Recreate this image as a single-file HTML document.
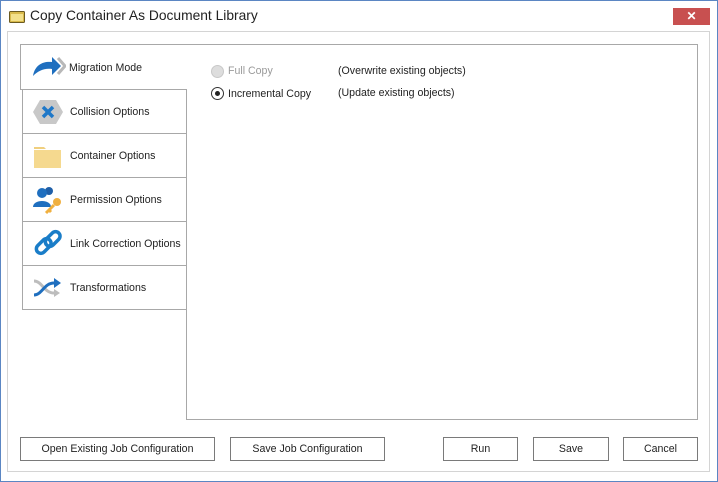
<!DOCTYPE html>
<html><head><style>
*{margin:0;padding:0;box-sizing:border-box}
body{width:718px;height:482px;background:#fff;font-family:"Liberation Sans",Tahoma,sans-serif;font-size:10.6px;color:#222;position:relative;overflow:hidden}
.win{position:absolute;left:0;top:0;width:718px;height:482px;border:1px solid #5b86c3}
.title{position:absolute;left:30px;top:8px;font-size:13.8px;color:#222}
.close{position:absolute;left:673px;top:8px;width:37px;height:17px;background:#c85050;color:#fff;text-align:center;font-size:12px;line-height:17px;font-weight:bold}
.panel{position:absolute;left:7px;top:31px;width:703px;height:441px;border:1px solid #d4d4d4}
.content{position:absolute;left:186px;top:44px;width:512px;height:376px;border:1px solid #a8a8a8}
.tab{position:absolute;left:22px;width:165px;height:45px;border:1px solid #a8a8a8;background:#fff;}
.tab span{position:absolute;left:47px;top:16px}
.tab svg{position:absolute;left:9px;top:7px}
.sel{left:20px;top:44px;width:167px;border-right:none;height:46px;z-index:2}
.sel span{left:48px;top:17px}
.btn{position:absolute;top:437px;height:24px;border:1px solid #7a7a7a;background:#fff;text-align:center;line-height:22px;font-size:10.6px}
.rad{position:absolute;width:13px;height:13px;border-radius:50%;border:1px solid #333;background:#fff}
</style></head><body>
<div class="win"></div>
<svg style="position:absolute;left:9px;top:9px" width="16" height="14"><rect x="0.5" y="2.5" width="15" height="11" rx="1" fill="#d8b94a" stroke="#6b5a20"/><rect x="2" y="5" width="12" height="7" fill="#f3e08a"/></svg>
<div class="title">Copy Container As Document Library</div>
<div class="close">✕</div>
<div class="panel"></div>
<div class="content"></div>
<div class="tab sel"><svg width="36" height="30"><path d="M3 24 C5 12 14 9 22 10 L22 5 L31 14 L22 23 L22 17 C14 16 8 19 3 24Z" fill="#1f6fbf"/><path d="M28 6 L35 14 L28 22" stroke="#b8b8b8" stroke-width="3" fill="none"/></svg><span>Migration Mode</span></div>
<div class="tab" style="top:89px"><svg width="32" height="30"><polygon points="8,3 24,3 31,15 24,27 8,27 1,15" fill="#c8c8c8"/><path d="M11 10 L21 20 M21 10 L11 20" stroke="#1f78c8" stroke-width="3.5"/></svg><span>Collision Options</span></div>
<div class="tab" style="top:133px"><svg width="32" height="30"><path d="M2 8 L2 6 L12 6 L14 8 Z" fill="#f0cf7e"/><rect x="2" y="9" width="27" height="18" fill="#f5d98f"/></svg><span>Container Options</span></div>
<div class="tab" style="top:177px"><svg width="32" height="30"><circle cx="17" cy="6" r="4" fill="#1f5fa8"/><circle cx="10" cy="8" r="5" fill="#1f6fbf"/><path d="M1 22 C1 14 19 14 19 22Z" fill="#1f6fbf"/><circle cx="25" cy="17" r="4" fill="#f0b040"/><path d="M22 20 L14 28 M17 25 L19 27" stroke="#f0b040" stroke-width="3"/></svg><span>Permission Options</span></div>
<div class="tab" style="top:221px"><svg width="32" height="30"><rect x="3" y="13" width="17" height="9" rx="4.5" transform="rotate(-45 11 17)" fill="none" stroke="#1a7dc8" stroke-width="3.5"/><rect x="12" y="6" width="17" height="9" rx="4.5" transform="rotate(-45 20 10)" fill="none" stroke="#1a7dc8" stroke-width="3.5"/></svg><span>Link Correction Options</span></div>
<div class="tab" style="top:265px"><svg width="32" height="30"><path d="M2 8 C10 8 12 20 22 20" stroke="#bdbdbd" stroke-width="3" fill="none"/><path d="M22 16 L28 20 L22 24Z" fill="#bdbdbd"/><path d="M2 22 C10 22 12 10 22 10" stroke="#1f6fbf" stroke-width="3" fill="none"/><path d="M22 5 L29 10 L22 15Z" fill="#1f6fbf"/></svg><span>Transformations</span></div>
<div class="rad" style="left:211px;top:65px;border-color:#c8c8c8;background:#ddd"></div>
<div style="position:absolute;left:228px;top:65px;color:#9a9a9a">Full Copy</div>
<div style="position:absolute;left:338px;top:65px">(Overwrite existing objects)</div>
<div class="rad" style="left:211px;top:87px"><div style="position:absolute;left:3px;top:3px;width:5px;height:5px;border-radius:50%;background:#222"></div></div>
<div style="position:absolute;left:228px;top:88px">Incremental Copy</div>
<div style="position:absolute;left:338px;top:87px">(Update existing objects)</div>
<div class="btn" style="left:20px;width:195px">Open Existing Job Configuration</div>
<div class="btn" style="left:230px;width:155px">Save Job Configuration</div>
<div class="btn" style="left:443px;width:75px">Run</div>
<div class="btn" style="left:533px;width:76px">Save</div>
<div class="btn" style="left:623px;width:75px">Cancel</div>
</body></html>
